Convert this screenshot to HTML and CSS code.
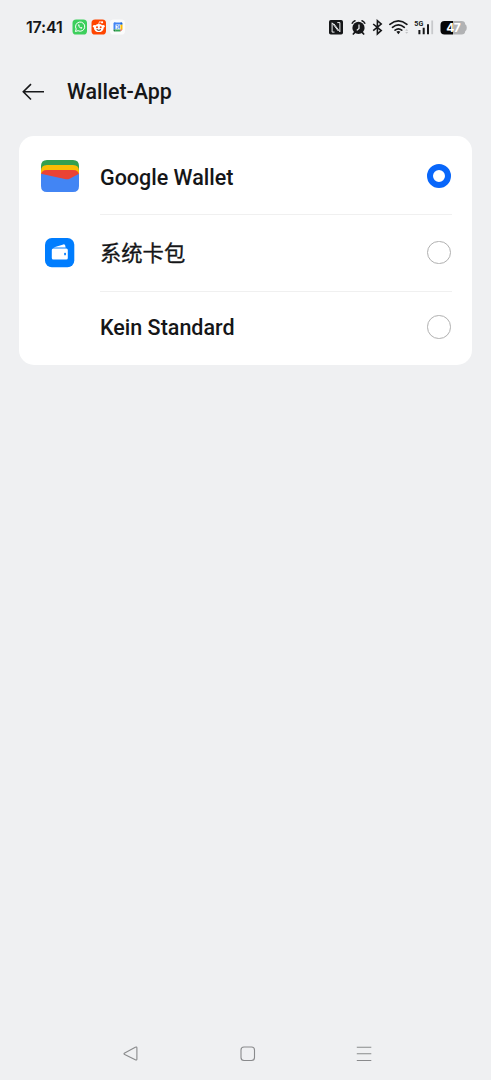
FILE: index.html
```html
<!DOCTYPE html>
<html lang="de">
<head>
<meta charset="utf-8">
<title>Wallet-App</title>
<link rel="stylesheet" href="styles.css">
</head>
<body>
<div class="screen">
  <div class="status">
    <span class="time">17:41</span>
    <svg class="notifications" width="56" height="18" viewBox="0 0 56 18">
      <rect x="1.500" y="1.500" width="14.500" height="15" rx="3.6" fill="#3dcf5c"/>
      <path d="M4.400 13.500l.8-2.500a4.600 4.600 0 1 1 1.800 1.700z" fill="none" stroke="#fff" stroke-width="1" stroke-linejoin="round"/>
      <path d="M7.300 6.500c-.7 1.500 2 4.600 3.600 4.100l.5-1-1.300-.7-.7.5-1.200-1.300.5-.7-.7-1.200z" fill="#fff"/>
      <rect x="20.500" y="1.500" width="14.500" height="15" rx="3.600" fill="#ff4500"/>
      <path d="M27.700 6l.8-2.300 2 .5" fill="none" stroke="#fff" stroke-width=".8"/>
      <circle cx="31.100" cy="4.300" r="1.100" fill="#fff"/>
      <circle cx="23.300" cy="8.300" r="1.400" fill="#fff"/><circle cx="32.300" cy="8.300" r="1.400" fill="#fff"/>
      <ellipse cx="27.800" cy="10.100" rx="4.900" ry="4" fill="#fff"/>
      <circle cx="26" cy="9.200" r="1" fill="#ff4500"/><circle cx="29.700" cy="9.200" r="1" fill="#ff4500"/>
      <path d="M25.700 11.600q2.100 1.500 4.200 0" fill="none" stroke="#502018" stroke-width="1"/>
      <rect x="39" y="1.500" width="15" height="15" rx="3.600" fill="#fbfbfc"/>
      <path d="M43 4.500h8v2h-8z" fill="#4285f4"/><path d="M42.500 5.500q0-1 1-1h1v7h-2z" fill="#4285f4"/>
      <path d="M49.500 6.500h2v5h-2z" fill="#fbbc04"/><path d="M44.500 11.500h5v2h-5z" fill="#34a853"/><path d="M42.500 11.500h2v2h-1q-1 0-1-1z" fill="#188038"/>
      <path d="M49.500 4.500h1q1 0 1 1v1h-2z" fill="#1967d2"/><path d="M49.500 11.500h2l-2 2z" fill="#ea4335"/>
      <path d="M45.500 7.500h1.600v2.800h-1.500M48.500 10.600V7.300" stroke="#4285f4" fill="none" stroke-width=".8"/>
    </svg>
    <svg class="indicators" width="140" height="20" viewBox="328 17 140 20">
      <rect x="329" y="20" width="14" height="14.500" rx="1.800" fill="#161719"/>
      <path d="M334.500 32.100h-2.400v-9.300l6.200 8.200M337.300 22.600h2.600v9.200l-6.200-8.200" fill="none" stroke="#f0f1f3" stroke-width="1"/>
      <circle cx="358.500" cy="27.900" r="6.100" fill="#161719"/>
      <path d="M352.200 23.200q.8-1.800 2.800-2.500M364.800 23.200q-.8-1.800-2.800-2.500" fill="none" stroke="#161719" stroke-width="1.500" stroke-linecap="round"/>
      <path d="M354.600 32.600l-1.300 1.400M362.400 32.600l1.300 1.400" stroke="#161719" stroke-width="1.700" stroke-linecap="round"/>
      <path d="M359 24.500v3.900l-2.200 2" fill="none" stroke="#f0f1f3" stroke-width="1.250"/>
      <path d="M373.200 24l8 6.600-3.800 3.300v-13.200l3.800 3.300-8 6.600" fill="none" stroke="#161719" stroke-width="1.600"/>
      <g fill="none" stroke="#161719" stroke-width="1.700" stroke-linecap="round">
        <path d="M389.900 24.300q8.500-7 17 0M392.500 27.300q5.900-4.900 11.800 0M395.100 30.100q3.300-2.600 6.600 0"/>
      </g>
      <path d="M396.400 31.800q2-1.400 4 0l-2 2.400z" fill="#161719"/>
      <path d="M405.200 30.800l1.500-1.700 1.500 1.700zM405.200 32.100l1.500 1.700 1.500-1.700z" fill="#c2c3c6"/>
      <text class="network" x="414.300" y="25.700" textLength="9" lengthAdjust="spacingAndGlyphs">5G</text>
      <path d="M419.400 30v4.200M423.700 27.700v6.500M428 24.200v10" stroke="#161719" stroke-width="2"/>
      <path d="M432.200 20.500v13.700" stroke="#c8c9cc" stroke-width="1.800"/>
      <path d="M444.500 21h8.500v13.500h-8.500q-4 0-4-4v-5.500q0-4 4-4z" fill="#060607"/>
      <path d="M453 21h8.500q3.500 0 3.700 3.200 1.600.9 1.600 3.500t-1.600 3.500q-.2 3.300-3.700 3.300h-8.500z" fill="#b1b2b4"/>
      <text class="charge" x="453.300" y="32" text-anchor="middle">47</text>
    </svg>
  </div>

  <header class="header">
    <svg width="24" height="20" viewBox="0 0 24 20"><path d="M9 2.100L1.300 9.800 9 17.500M1.300 9.800H22" fill="none" stroke="#18191b" stroke-width="1.600"/></svg>
    <h1 class="title">Wallet-App</h1>
  </header>

  <main class="card">
    <label class="row first">
      <span class="icon">
        <svg width="38" height="32" viewBox="0 0 38 32">
          <path d="M0 12V6q0-6 6-6h26q6 0 6 6v6z" fill="#34a04f"/>
          <path d="M0 17v-6q0-6 6-6h26q6 0 6 6v6z" fill="#fbbc04"/>
          <path d="M0 22v-6.500Q0 10 6 10h26q6 0 6 5.500V22z" fill="#ea4335"/>
          <path d="M0 13.700l23.800 5.400q2.800.6 5.300-.7l8.900-4.600V26q0 6-6 6H6q-6 0-6-6z" fill="#4285f4"/>
        </svg>
      </span>
      <span class="name">Google Wallet</span>
      <span class="radio checked"></span>
    </label>
    <label class="row second">
      <span class="icon">
        <svg width="30" height="30" viewBox="0 0 30 30">
          <rect width="29.300" height="29.300" rx="6.800" fill="#007dfe"/>
          <path d="M8.500 9.600l9.800-3.200q1.300-.4 1.700.8l.7 2.400z" fill="#fff"/>
          <rect x="6.800" y="10.400" width="16" height="11" rx="1.500" fill="#fff"/>
          <rect x="19.200" y="14.700" width="1.700" height="2.600" rx=".6" fill="#007dfe"/>
        </svg>
      </span>
      <span class="name chinese">系统卡包</span>
      <span class="radio"></span>
    </label>
    <label class="row last">
      <span class="icon"></span>
      <span class="name">Kein Standard</span>
      <span class="radio"></span>
    </label>
  </main>

  <nav class="nav">
    <svg width="16" height="16" viewBox="0 0 16 16"><path d="M1.700 6.900L12.300 1.300q1.600-.8 1.600.8v10.800q0 1.600-1.600.8L1.700 8.500q-1.400-.8 0-1.600z"/></svg>
    <svg width="16" height="16" viewBox="0 0 16 16"><rect x="1" y="1" width="13.500" height="13.500" rx="3"/></svg>
    <svg width="16" height="16" viewBox="0 0 16 16"><path d="M.8 1.200h14.500M.8 7.800h14.500M.8 14.500h14.500"/></svg>
  </nav>
</div>
</body>
</html>
```

FILE: styles.css
```css
body {
  margin: 0;
  background: #eff0f2;
  color: #151618;
  font-family: Roboto, "Noto Sans CJK SC", sans-serif;
}

.screen {
  display: flex;
  flex-direction: column;
  height: 1080px;
}

.status {
  display: flex;
  align-items: center;
  height: 54px;
  padding: 0 23px 0 26px;
}

.time {
  width: 37px;
  font: 600 16px/20px Inter, sans-serif;
  letter-spacing: -0.2px;
  white-space: nowrap;
}

.notifications {
  margin-left: 8px;
}

.indicators {
  margin-left: auto;
}

.network {
  font: 700 8px Roboto, sans-serif;
  fill: #161719;
}

.charge {
  font: 700 12px Inter, sans-serif;
  letter-spacing: -0.5px;
  fill: #fff;
}

.header {
  display: flex;
  align-items: center;
  gap: 21px;
  height: 76px;
  padding-left: 22px;
}

.title {
  margin: 0;
  font-size: 21.4px;
  font-weight: 500;
  line-height: 28px;
}

.card {
  margin: 6px 19px 0;
  border-radius: 15px;
  background: #fff;
}

.row {
  display: grid;
  box-sizing: border-box;
  grid-template-columns: 81px 1fr 24px;
  align-items: center;
  padding-right: 21px;
  background: linear-gradient(#f0f0f0, #f0f0f0) 81px 100% / 352px 1px no-repeat;
}

.first {
  height: 79px;
  padding-top: 1px;
}

.second {
  height: 77px;
  padding-bottom: 2px;
}

.last {
  height: 73px;
  padding-bottom: 3px;
  background: none;
}

.icon {
  display: flex;
  justify-content: center;
}

.icon svg {
  display: block;
}

.name {
  padding-top: 3px;
  font-size: 21.5px;
  font-weight: 500;
  line-height: 28px;
}

.last .name {
  padding-top: 1px;
}

.chinese {
  font-size: 21.3px;
  font-weight: 400;
  -webkit-text-stroke: 0.3px #151618;
}

.radio {
  box-sizing: border-box;
  width: 23.5px;
  height: 23.5px;
  border: 1.5px solid #b0b0b0;
  border-radius: 50%;
}

.checked {
  width: 24px;
  height: 24px;
  border: 6.5px solid #0866fa;
}

.nav {
  display: flex;
  justify-content: space-between;
  margin: auto 119px 18px 123px;
}

.nav svg {
  fill: none;
  stroke: #898a8c;
  stroke-width: 1.1;
}
```
